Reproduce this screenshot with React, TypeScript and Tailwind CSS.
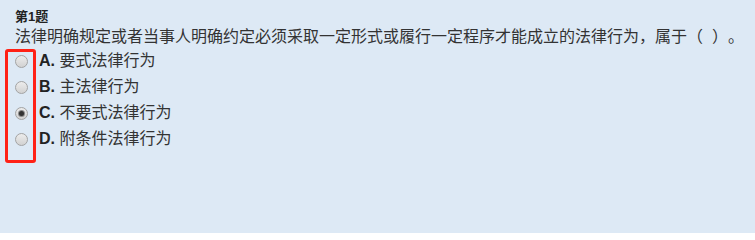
import React from "react";

const options = [
  { key: "A", text: "要式法律行为", checked: false },
  { key: "B", text: "主法律行为", checked: false },
  { key: "C", text: "不要式法律行为", checked: true },
  { key: "D", text: "附条件法律行为", checked: false },
];

function Radio({ checked }: { checked: boolean }) {
  return (
    <span className="relative flex h-[13px] w-[13px] shrink-0 items-center justify-center rounded-full border border-[#a3a3a3] bg-gradient-to-b from-[#ececec] to-[#d2d2d2]">
      {checked && <span className="h-[5px] w-[5px] rounded-full bg-[#333] shadow-[0_0_0_1px_#8a8a8a]" />}
    </span>
  );
}

export default function App() {
  return (
    <div
      className="relative h-[233px] w-[755px] bg-[#dde9f5] pl-[15px] pt-[7px] text-[#333]"
      style={{ fontFamily: '"Liberation Sans", "Noto Sans CJK SC", sans-serif' }}
    >
      <div className="h-[20px] text-[13px] font-bold leading-[20px] text-[#222]">第1题</div>
      <div className="h-[20px] text-[16px] leading-[20px] whitespace-pre [text-spacing-trim:space-all]">
        法律明确规定或者当事人明确约定必须采取一定形式或履行一定程序才能成立的法律行为，属于（  ）。
      </div>
      <div className="mt-[1px] flex flex-col">
        {options.map((o) => (
          <label key={o.key} className="flex h-[26px] items-center text-[16px]">
            <Radio checked={o.checked} />
            <span className="ml-[11px]">
              <b className="text-[#222]">{o.key}.</b> {o.text}
            </span>
          </label>
        ))}
      </div>

      {/* annotation box */}
      <div className="absolute left-[5px] top-[49px] h-[114px] w-[31px] rounded-[3px] border-[3px] border-[#ff2116]" />
    </div>
  );
}
